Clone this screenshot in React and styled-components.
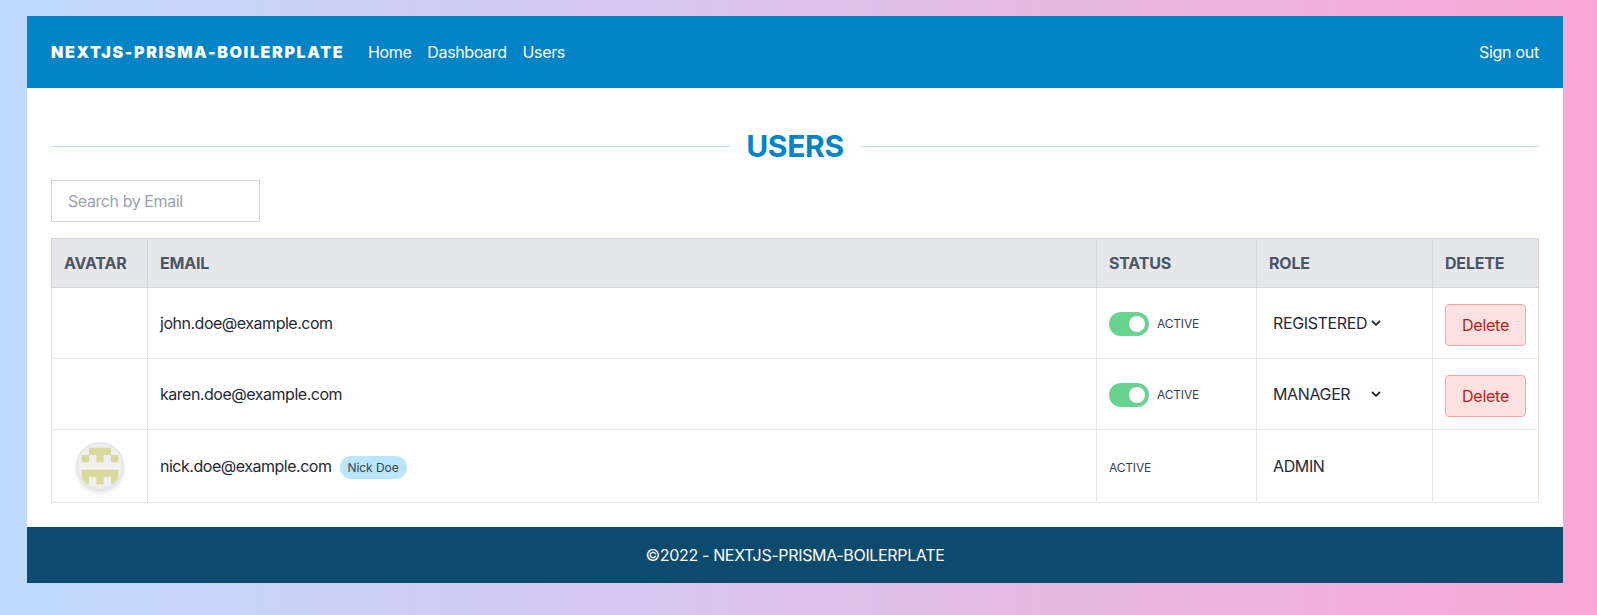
import React from "react";
import styled, { createGlobalStyle, css } from "styled-components";

const GlobalStyle = createGlobalStyle`
  *, *::before, *::after { box-sizing: border-box; }
  html { height: 100%; overflow: hidden; }
  body {
    margin: 0;
    min-height: 100%;
    background: linear-gradient(to right, #bfdbfe, #f9a8d4);
    font-family: Inter, "Liberation Sans", sans-serif;
    font-size: 16px;
    line-height: 24px;
    letter-spacing: -0.37px;
    color: #1f2937;
    -webkit-font-smoothing: antialiased;
  }
`;

const Page = styled.div`
  width: 1590px;
  padding: 16px 0 32px;
`;

const Shell = styled.div`
  width: 1536px;
  margin: 0 auto;
  background: #fff;
`;

const Navbar = styled.header`
  display: flex;
  align-items: center;
  justify-content: space-between;
  height: 72px;
  padding: 0 24px;
  background: #0284c7;
  color: #fff;
`;

const NavGroup = styled.nav`
  display: flex;
  align-items: center;
  gap: 16px;
`;

const Brand = styled.a`
  width: 293px;
  margin-right: 8px;
  white-space: nowrap;
  font-weight: 900;
  letter-spacing: 1.66px;
`;

const NavLink = styled.a`
  color: #fff;
`;

const SignOut = styled(NavLink)`
  letter-spacing: -0.27px;
`;

const Main = styled.main`
  padding: 40px 24px 24px;
`;

const TitleRow = styled.div`
  display: flex;
  align-items: center;
  height: 36px;
`;

const Rule = styled.span`
  flex: 1;
  height: 1px;
  background: #bae6fd;
`;

const Title = styled.h1`
  margin: 0;
  padding: 0 16px;
  font-size: 30px;
  line-height: 36px;
  font-weight: 700;
  letter-spacing: -0.32px;
  color: #0284c7;
`;

const Search = styled.input`
  display: block;
  width: 209px;
  height: 42px;
  margin: 16px 0;
  padding: 8px 16px;
  border: 1px solid #d1d5db;
  border-radius: 0;
  background: #fff;
  font: inherit;
  letter-spacing: -0.42px;
  &::placeholder { color: #9ca3af; opacity: 1; }
`;

const Table = styled.table`
  width: 1487px;
  table-layout: fixed;
  border-collapse: collapse;
`;

const Col = styled.col`
  width: ${(p) => p.$w}px;
`;

const HeadRow = styled.tr`
  height: 49px;
  background: #e5e7eb;
`;

const HeadCell = styled.th`
  padding: 0 12px;
  border: 1px solid #d1d5db;
  text-align: left;
  font-weight: 700;
  letter-spacing: -0.18px;
  color: #4b5563;
`;

const Row = styled.tr`
  height: ${(p) => (p.$tall ? 73 : 71)}px;
`;

const Cell = styled.td`
  padding: ${(p) => p.$pad || "0 12px"};
  border: 1px solid #e5e7eb;
  vertical-align: middle;
`;

const Inline = styled.div`
  display: flex;
  align-items: center;
  gap: 8px;
`;

const Email = styled.span`
  letter-spacing: -0.48px;
`;

const Avatar = styled.svg`
  display: block;
  width: 48px;
  height: 48px;
  margin: 0 auto;
  border: 2px solid #e5e7eb;
  border-radius: 50%;
  background: #f0f0f0;
  box-shadow: 0 4px 6px -1px rgba(0, 0, 0, 0.1), 0 2px 4px -2px rgba(0, 0, 0, 0.1);
`;

const Badge = styled.span`
  margin-top: 3px;
  padding: 4px 8px 3px;
  border-radius: 12px;
  background: #bae6fd;
  font-size: 12px;
  line-height: 16px;
  letter-spacing: -0.07px;
  color: #374151;
`;

const Toggle = styled.span`
  display: flex;
  justify-content: flex-end;
  width: 40px;
  height: 24px;
  padding: 4px;
  border-radius: 12px;
  background: #68d391;
`;

const Knob = styled.span`
  width: 16px;
  height: 16px;
  border-radius: 50%;
  background: #fff;
`;

const Status = styled.span`
  font-size: 12px;
  line-height: 16px;
  letter-spacing: -0.18px;
  color: #374151;
  ${(p) => p.$lowered && css`padding-top: 3px;`}
`;

const Role = styled.div`
  display: flex;
  align-items: center;
  justify-content: space-between;
  width: 108px;
`;

const Chevron = styled.svg`
  width: 10px;
  height: 6px;
  flex: none;
`;

const DeleteButton = styled.button`
  display: block;
  width: 81px;
  height: 42px;
  padding: 0;
  border: 1px solid #fca5a5;
  border-radius: 4px;
  background: #fee2e2;
  color: #b91c1c;
  font: inherit;
  letter-spacing: -0.25px;
`;

const Footer = styled.footer`
  display: flex;
  align-items: center;
  justify-content: center;
  height: 56px;
  background: #0c4a6e;
  color: #fff;
  letter-spacing: -0.34px;
`;

const users = [
  { email: "john.doe@example.com", role: "REGISTERED" },
  { email: "karen.doe@example.com", role: "MANAGER" },
  { email: "nick.doe@example.com", role: "ADMIN", name: "Nick Doe", self: true },
];

const blocks = [[1, 0, 3], [0, 1, 1], [2, 1, 1], [4, 1, 1], [0, 3, 5], [0, 4, 1], [2, 4, 1], [4, 4, 1]];

const Identicon = () => (
  <Avatar viewBox="0 0 420 420">
    {blocks.map(([x, y, w]) => (
      <rect key={`${x}-${y}`} x={35 + x * 70} y={35 + y * 70} width={w * 70} height="70" fill="#d8da9b" />
    ))}
  </Avatar>
);

const UserRow = ({ user }) => (
  <Row $tall={user.self}>
    <Cell>{user.self && <Identicon />}</Cell>
    <Cell>
      <Inline>
        <Email>{user.email}</Email>
        {user.name && <Badge>{user.name}</Badge>}
      </Inline>
    </Cell>
    <Cell $pad={user.self ? "0 12px" : "2px 12px 0"}>
      <Inline>
        {!user.self && <Toggle><Knob /></Toggle>}
        <Status $lowered={user.self}>ACTIVE</Status>
      </Inline>
    </Cell>
    <Cell $pad="0 12px 0 16px">
      <Role>
        {user.role}
        {!user.self && (
          <Chevron viewBox="0 0 10 6" fill="none" stroke="#1f2937" strokeWidth="1.8">
            <path d="M1 1 5 4.8 9 1" />
          </Chevron>
        )}
      </Role>
    </Cell>
    <Cell $pad="4px 12px 0">{!user.self && <DeleteButton>Delete</DeleteButton>}</Cell>
  </Row>
);

export default function App() {
  return (
    <>
      <GlobalStyle />
      <Page>
        <Shell>
          <Navbar>
            <NavGroup>
              <Brand>NEXTJS-PRISMA-BOILERPLATE</Brand>
              <NavLink>Home</NavLink>
              <NavLink>Dashboard</NavLink>
              <NavLink>Users</NavLink>
            </NavGroup>
            <SignOut>Sign out</SignOut>
          </Navbar>
          <Main>
            <TitleRow>
              <Rule />
              <Title>USERS</Title>
              <Rule />
            </TitleRow>
            <Search placeholder="Search by Email" />
            <Table>
              <colgroup>
                {[96, 949, 160, 176, 106].map((w) => <Col key={w} $w={w} />)}
              </colgroup>
              <thead>
                <HeadRow>
                  {["AVATAR", "EMAIL", "STATUS", "ROLE", "DELETE"].map((h) => (
                    <HeadCell key={h}>{h}</HeadCell>
                  ))}
                </HeadRow>
              </thead>
              <tbody>
                {users.map((u) => <UserRow key={u.email} user={u} />)}
              </tbody>
            </Table>
          </Main>
          <Footer>©2022 - NEXTJS-PRISMA-BOILERPLATE</Footer>
        </Shell>
      </Page>
    </>
  );
}
